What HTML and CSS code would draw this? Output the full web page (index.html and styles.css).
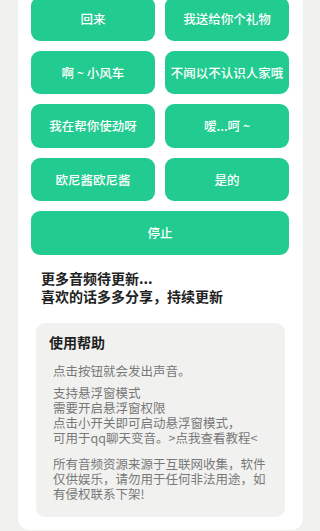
FILE: index.html
```html
<!DOCTYPE html>
<html lang="zh-CN">
<head>
<meta charset="utf-8">
<meta name="viewport" content="width=device-width, initial-scale=1">
<link rel="stylesheet" href="styles.css">
<title>音效</title>
</head>
<body>
<div class="card">
  <div class="grid">
    <button class="btn">回来</button>
    <button class="btn">我送给你个礼物</button>
    <button class="btn">啊 ~ 小风车</button>
    <button class="btn">不闻以不认识人家哦</button>
    <button class="btn">我在帮你使劲呀</button>
    <button class="btn">嗳...呵 ~</button>
    <button class="btn">欧尼酱欧尼酱</button>
    <button class="btn">是的</button>
    <button class="btn wide">停止</button>
  </div>
  <div class="notice">更多音频待更新...<br>喜欢的话多多分享，持续更新</div>
  <div class="help">
    <div class="help-title">使用帮助</div>
    <p class="help-p">点击按钮就会发出声音。</p>
    <p class="help-p">支持悬浮窗模式<br>需要开启悬浮窗权限<br>点击小开关即可启动悬浮窗模式，<br>可用于qq聊天变音。&gt;点我查看教程&lt;</p>
    <p class="help-p gap-lg">所有音频资源来源于互联网收集，软件<br>仅供娱乐，请勿用于任何非法用途，如<br>有侵权联系下架!</p>
  </div>
</div>
</body>
</html>
```

FILE: styles.css
```css
html, body {
  margin: 0;
  padding: 0;
}
body {
  background: #f0f1ef;
  font-family: "Noto Sans CJK SC", "Noto Sans", sans-serif;
  height: 531px;
  overflow: hidden;
}
.card {
  margin: 0 17px 0 18px;
  background: #ffffff;
  border-radius: 0 0 12px 12px;
  padding: 0 14px 13px 13px;
}
.grid {
  margin-top: -3px;
  display: grid;
  grid-template-columns: 1fr 1fr;
  column-gap: 10px;
  row-gap: 10px;
}
.btn {
  height: 43.5px;
  border: none;
  border-radius: 9px;
  background: #22cb90;
  color: #ffffff;
  font-family: "Noto Sans CJK SC", "Noto Sans", sans-serif;
  font-size: 12.5px;
  font-weight: 500;
  padding: 0;
  margin: 0;
}
.wide {
  grid-column: 1 / span 2;
}
.notice {
  margin-top: 14.5px;
  padding-left: 10px;
  font-size: 14px;
  line-height: 18px;
  font-weight: 700;
  color: #222222;
}
.help {
  margin: 18px 4px 0 5px;
  background: #f1f2f0;
  border-radius: 9px;
  padding: 10px 10px 16.5px 13px;
}
.help-title {
  font-size: 14px;
  line-height: 18px;
  font-weight: 700;
  color: #1e1e1e;
}
.help-p {
  margin: 7px 0 0 4px;
  font-size: 12.5px;
  line-height: 15px;
  color: #787878;
}
.help-title + .help-p {
  margin-top: 11.5px;
}
.help-p.gap-lg {
  margin-top: 11px;
}
```
